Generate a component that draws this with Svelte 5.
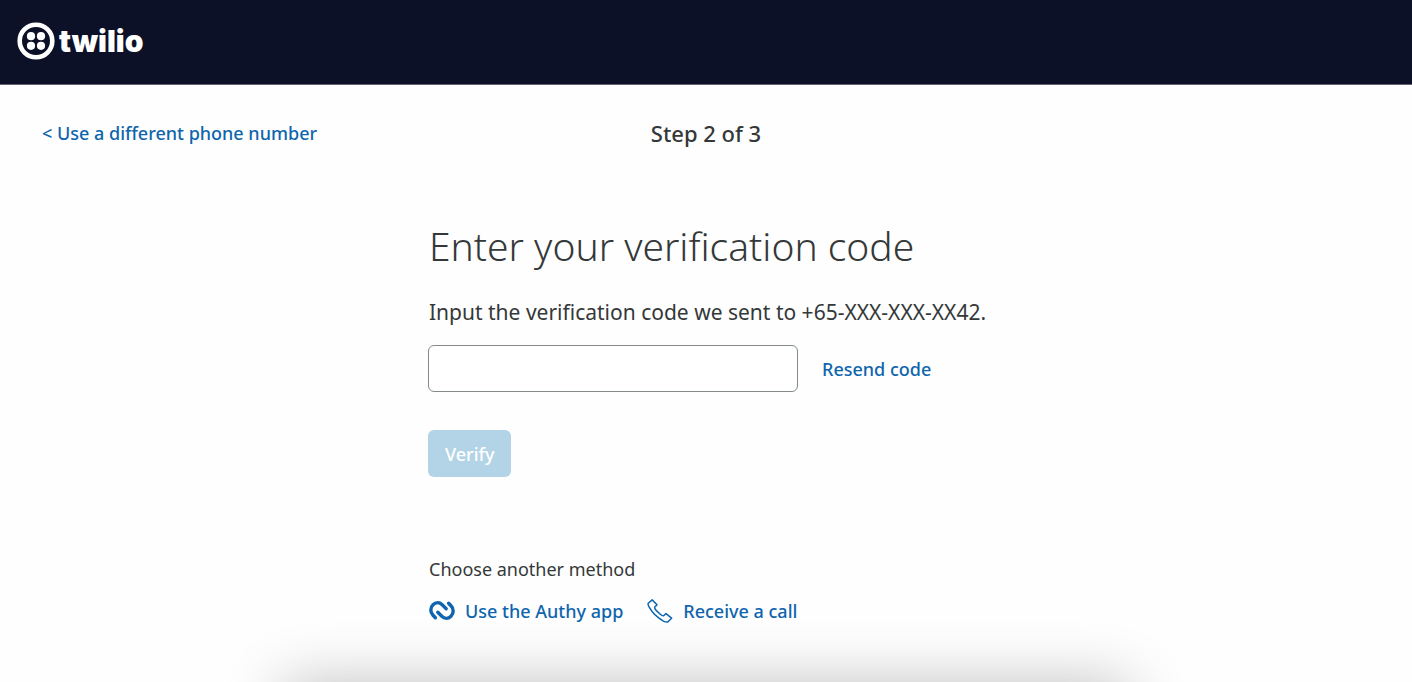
<script>
  let code = $state('');
</script>

<div class="page">
  <header class="topbar">
    <a class="brand" href="#home" aria-label="twilio">
      <svg width="38" height="38" viewBox="0 0 38 38" aria-hidden="true">
        <circle cx="19" cy="19" r="16.3" fill="none" stroke="#fff" stroke-width="4.6" />
        <g fill="#fff">
          <circle cx="14" cy="14.2" r="4.1" />
          <circle cx="24" cy="14.2" r="4.1" />
          <circle cx="14" cy="23.8" r="4.1" />
          <circle cx="24" cy="23.8" r="4.1" />
        </g>
      </svg>
      <span class="wordmark">twilio</span>
    </a>
  </header>

  <nav class="steps">
    <a class="back" href="#phone">&lt; Use a different phone number</a>
    <p class="step">Step 2 of 3</p>
  </nav>

  <main class="content">
    <h1>Enter your verification code</h1>
    <form onsubmit={(e) => e.preventDefault()}>
      <label for="code">Input the verification code we sent to +65-XXX-XXX-XX42.</label>
      <div class="entry">
        <input id="code" type="text" inputmode="numeric" autocomplete="one-time-code" bind:value={code} />
        <a href="#resend">Resend code</a>
      </div>
      <button type="submit" disabled={!code}>Verify</button>
    </form>

    <section class="methods">
      <h2>Choose another method</h2>
      <div class="choices">
        <a href="#authy">
          <svg width="26" height="22" viewBox="0 0 26 22" fill="none" stroke="#0e65ad" stroke-width="3.4" stroke-linecap="round" aria-hidden="true">
            <path d="M6.4 17.7 L4 15.2 C1.1 12.3 1.1 7.6 4 4.8 C6.8 2 10.6 2.2 13.2 4.7 L17.2 8.7" />
            <path d="M19.6 3.3 L22 5.8 C24.9 8.7 24.9 13.4 22 16.2 C19.2 19 15.4 18.8 12.8 16.3 L8.8 12.3" />
          </svg>
          <span>Use the Authy app</span>
        </a>
        <a href="#call">
          <svg width="26" height="24" viewBox="0 0 26 24" fill="none" stroke="#0e65ad" stroke-width="1.5" stroke-linejoin="round" aria-hidden="true">
            <path d="M1.2 4.3 L5.2 0.9 L10 5.7 L7.6 8.2 C7.3 9.2 8 10.2 9.4 11.6 L13 15 C14.4 16.3 15.6 17.2 16.6 16.8 L19 14.6 L24.6 19.2 L20.8 23 C19.6 23.3 17.6 22.7 16 21.8 C10 18.4 5.2 13.6 2.2 8.2 C1.3 6.6 0.8 5.2 1.2 4.3 Z" />
          </svg>
          <span>Receive a call</span>
        </a>
      </div>
    </section>
  </main>
  <div class="shade" aria-hidden="true"></div>
</div>

<style>
  :global(body) {
    margin: 0;
    background: #fefefe;
  }
  .page {
    position: relative;
    box-sizing: border-box;
    min-height: 100vh;
    overflow: hidden;
    color: #343839;
    font-family: "Noto Sans", "Open Sans", sans-serif;
    font-size: 18px;
    line-height: 24px;
  }
  a {
    color: #0e65ad;
    font-weight: 500;
    text-decoration: none;
  }
  .topbar {
    display: flex;
    align-items: center;
    padding: 22px 17px 24px;
    background: #0c1127;
    border-bottom: 1px solid #64616f;
  }
  .brand {
    display: flex;
    align-items: center;
    gap: 4px;
    color: #fff;
  }
  .wordmark {
    font: 900 30px/38px Inter, sans-serif;
  }
  .steps {
    display: grid;
    grid-template-columns: 1fr auto 1fr;
    align-items: center;
    padding: 32px 42px;
  }
  .step {
    margin: 0;
    font-size: 22px;
    line-height: 32px;
    font-weight: 500;
  }
  .content {
    max-width: 556px;
    margin: 0 auto;
    padding: 37px 0;
  }
  h1,
  h2,
  label,
  .choices {
    padding-left: 1px;
  }
  h1 {
    margin: 0 0 24px;
    font-size: 39px;
    line-height: 56px;
    font-weight: 300;
  }
  label {
    display: block;
    font-size: 21px;
    line-height: 28px;
    white-space: nowrap;
  }
  .entry {
    display: flex;
    align-items: center;
    gap: 24px;
    margin: 19px 0 38px;
  }
  input {
    box-sizing: border-box;
    width: 370px;
    height: 47px;
    padding: 0 16px;
    border: 1px solid #858b8d;
    border-radius: 6px;
    background: #fff;
    color: inherit;
    font: inherit;
  }
  button {
    display: block;
    height: 47px;
    padding: 0 17px;
    border: 0;
    border-radius: 6px;
    background: #0e65ad;
    color: #fff;
    font: inherit;
    font-weight: 500;
  }
  button:disabled {
    background: #b3d3e7;
  }
  .methods {
    margin-top: 80px;
  }
  h2 {
    margin: 0 0 18px;
    font-size: 18px;
    line-height: 24px;
    font-weight: 400;
  }
  .choices {
    display: flex;
    gap: 24px;
  }
  .choices a {
    display: flex;
    align-items: center;
    gap: 10px;
  }
  .shade {
    position: absolute;
    top: 100%;
    left: 20%;
    right: 20%;
    height: 80px;
    border-radius: 8px;
    box-shadow: 0 0 60px rgba(0, 0, 0, 0.24);
  }
  @media (max-width: 600px) {
    .content {
      padding: 37px 16px;
    }
    label {
      white-space: normal;
    }
    input {
      width: 100%;
      min-width: 0;
    }
    .choices {
      flex-wrap: wrap;
    }
  }
</style>
